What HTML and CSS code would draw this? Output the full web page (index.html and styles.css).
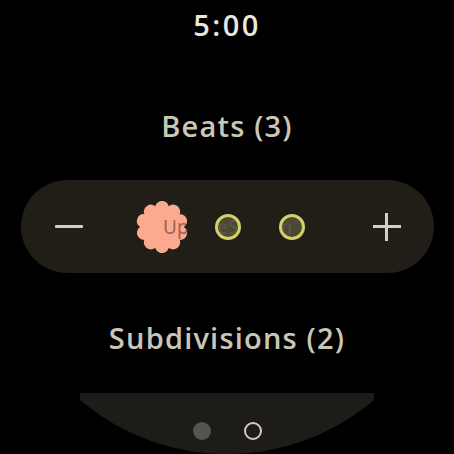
FILE: index.html
```html
<!DOCTYPE html>
<html>
<head>
<meta charset="utf-8">
<link rel="stylesheet" href="styles.css">
</head>
<body>
<div class="screen">
  <div class="time">5:00</div>
  <div class="title beats">Beats (3)</div>
  <div class="pill">
    <div class="minus"></div>
    <svg class="flower" width="52" height="52" viewBox="-26 -26 52 52">
      <defs>
        <clipPath id="fl" transform="rotate(18)">
          <circle r="21.5"/>
          <circle cx="19" cy="0" r="7"/>
          <circle cx="15.37" cy="11.17" r="7"/>
          <circle cx="5.87" cy="18.07" r="7"/>
          <circle cx="-5.87" cy="18.07" r="7"/>
          <circle cx="-15.37" cy="11.17" r="7"/>
          <circle cx="-19" cy="0" r="7"/>
          <circle cx="-15.37" cy="-11.17" r="7"/>
          <circle cx="-5.87" cy="-18.07" r="7"/>
          <circle cx="5.87" cy="-18.07" r="7"/>
          <circle cx="15.37" cy="-11.17" r="7"/>
        </clipPath>
      </defs>
      <g clip-path="url(#fl)">
        <rect x="-30" y="-30" width="60" height="60" fill="#fba98f"/>
        <text x="1" y="7" class="svglabel">UpdateStream</text>
      </g>
    </svg>
    <div class="dot d1"><span class="label l2">UpdateStream</span></div>
    <div class="dot d2"><span class="label l3">UpdateStream</span></div>
    <div class="plus"></div>
  </div>
  <div class="title subs">Subdivisions (2)</div>
  <div class="bottom">
    <div class="pg filled"></div>
    <div class="pg ring"></div>
  </div>
</div>
</body>
</html>
```
FILE: styles.css
```css
html, body {
  margin: 0;
  padding: 0;
  background: #000;
}
.screen {
  width: 454px;
  height: 454px;
  overflow: hidden;
  display: flex;
  flex-direction: column;
  align-items: center;
  font-family: "Open Sans", "Noto Sans", sans-serif;
}
.time {
  margin-top: 10px;
  height: 30px;
  line-height: 30px;
  font-size: 29px;
  font-weight: 600;
  color: #e9e7de;
  letter-spacing: 2.5px;
}
.title {
  height: 34px;
  line-height: 34px;
  font-size: 29px;
  font-weight: 600;
  color: #cac7b8;
  letter-spacing: 1.2px;
}
.beats { margin-top: 69px; }
.subs { margin-top: 48px; }
.pill {
  margin-top: 37px;
  width: 413px;
  height: 93px;
  flex-shrink: 0;
  border-radius: 47px;
  background: #201e17;
  display: flex;
  align-items: center;
  box-sizing: border-box;
  padding-left: 34px;
}
.minus {
  width: 28px;
  height: 3px;
  flex-shrink: 0;
  background: #d2d0c5;
  border-radius: 1px;
}
.flower {
  display: block;
  flex-shrink: 0;
  margin-left: 53px;
}
.svglabel {
  font-family: "Noto Sans", sans-serif;
  font-size: 19px;
  fill: #9b6352;
}
.label {
  position: absolute;
  font-size: 19px;
  line-height: 26px;
  white-space: nowrap;
  font-family: "Noto Sans", sans-serif;
}
.dot {
  position: relative;
  width: 26px;
  height: 26px;
  flex-shrink: 0;
  box-sizing: border-box;
  border-radius: 50%;
  border: 3px solid #d6cf6e;
  background: #4b4834;
  overflow: hidden;
}
.d1 { margin-left: 27px; }
.d2 { margin-left: 38px; }
.l2 { left: -55px; top: -3px; color: #5d5a43; }
.l3 { left: -119px; top: -3px; color: #5d5a43; }
.plus {
  position: relative;
  width: 28px;
  height: 28px;
  flex-shrink: 0;
  margin-left: 68px;
}
.plus::before, .plus::after {
  content: "";
  position: absolute;
  background: #d2d0c5;
}
.plus::before { left: 0; top: 12.5px; width: 28px; height: 3px; }
.plus::after { left: 12.5px; top: 0; width: 3px; height: 28px; }
.bottom {
  margin-top: 38px;
  width: 294px;
  height: 61px;
  flex-shrink: 0;
  background: #1d1c18;
  clip-path: circle(227px at 147px -166px);
  display: flex;
  justify-content: center;
  align-items: flex-start;
  gap: 33px;
  padding-top: 29px;
  box-sizing: border-box;
}
.pg {
  width: 18px;
  height: 18px;
  border-radius: 50%;
  box-sizing: border-box;
}
.filled { background: #555452; }
.ring { border: 2.5px solid #cfcbc4; }
```
